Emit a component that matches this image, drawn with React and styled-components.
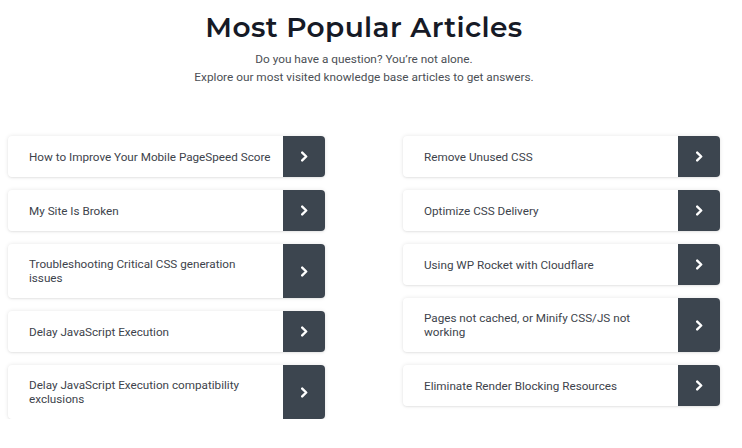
import React from "react";
import styled, { createGlobalStyle } from "styled-components";

const Global = createGlobalStyle`
  html, body { margin: 0; padding: 0; background: #ffffff; }
  body { font-family: Roboto, "Liberation Sans", sans-serif; }
`;

const Page = styled.div`
  width: 742px;
  padding: 10px 22px 0 8px;
  box-sizing: border-box;
`;

const Header = styled.header`
  display: flex;
  flex-direction: column;
  align-items: center;
`;

const Title = styled.h1`
  margin: 0;
  font-family: Montserrat, "Lato", sans-serif;
  font-weight: 600;
  font-size: 28px;
  line-height: 34px;
  letter-spacing: 0.4px;
  color: #161a26;
`;

const Sub = styled.p`
  margin: 6px 0 0;
  font-size: 11.8px;
  line-height: 18px;
  color: #4b4f55;
  text-align: center;
`;

const Columns = styled.div`
  display: grid;
  grid-template-columns: 317px 317px;
  column-gap: 78px;
  margin-top: 50px;
  align-items: start;
`;

const Column = styled.div`
  display: flex;
  flex-direction: column;
  gap: 13px;
`;

const Card = styled.a`
  display: flex;
  align-items: stretch;
  min-height: 41px;
  background: #ffffff;
  border-radius: 4px;
  box-shadow: 0 0 4px rgba(0, 0, 0, 0.1), 0 1px 2px rgba(0, 0, 0, 0.06);
  text-decoration: none;
  overflow: hidden;
`;

const Label = styled.span`
  flex: 1;
  display: flex;
  flex-direction: column;
  justify-content: center;
  padding: 13px 10px 13px 21px;
  font-size: 11.7px;
  line-height: 14px;
  color: #3d434b;
`;

const Arrow = styled.span`
  flex: 0 0 42px;
  display: flex;
  align-items: center;
  justify-content: center;
  background: #3c454f;
`;

const Chevron = () => (
  <svg width="9" height="11" viewBox="0 0 9 11">
    <path d="M2.2 1.6 L6.2 5.5 L2.2 9.4" fill="none" stroke="#fff" strokeWidth="2.4" strokeLinecap="round" strokeLinejoin="round" />
  </svg>
);

const left = [
  ["How to Improve Your Mobile PageSpeed Score"],
  ["My Site Is Broken"],
  ["Troubleshooting Critical CSS generation", "issues"],
  ["Delay JavaScript Execution"],
  ["Delay JavaScript Execution compatibility", "exclusions"],
];
const right = [
  ["Remove Unused CSS"],
  ["Optimize CSS Delivery"],
  ["Using WP Rocket with Cloudflare"],
  ["Pages not cached, or Minify CSS/JS not", "working"],
  ["Eliminate Render Blocking Resources"],
];

const List = ({ items }) => (
  <Column>
    {items.map((lines) => (
      <Card key={lines.join(" ")} href="#">
        <Label>
          {lines.map((l) => (
            <span key={l}>{l}</span>
          ))}
        </Label>
        <Arrow>
          <Chevron />
        </Arrow>
      </Card>
    ))}
  </Column>
);

export default function App() {
  return (
    <Page>
      <Global />
      <Header>
        <Title>Most Popular Articles</Title>
        <Sub>
          Do you have a question? You’re not alone.
          <br />
          Explore our most visited knowledge base articles to get answers.
        </Sub>
      </Header>
      <Columns>
        <List items={left} />
        <List items={right} />
      </Columns>
    </Page>
  );
}
